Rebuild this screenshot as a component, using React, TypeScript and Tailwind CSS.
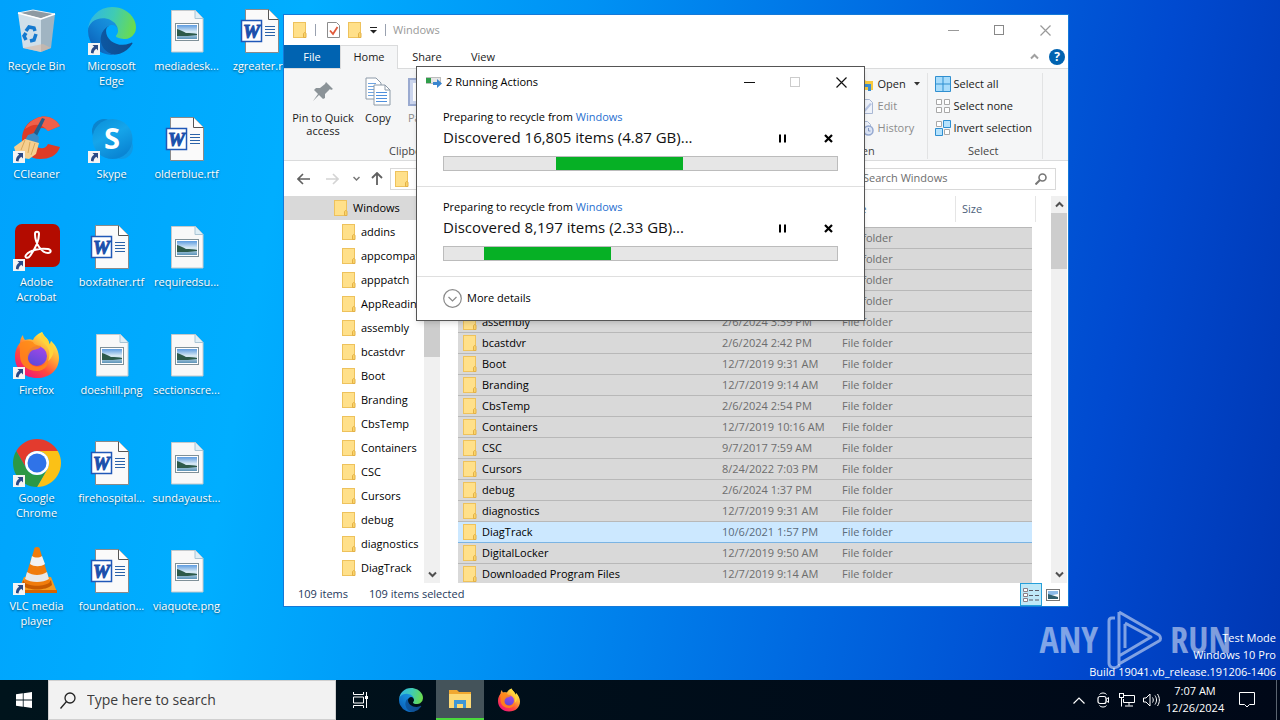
import React from "react";

interface DesktopItem {
  label: string;
  kind: string;
  shortcut?: boolean;
}

const desktopItems: DesktopItem[] = [
  { label: "Recycle Bin", kind: "bin" },
  { label: "CCleaner", kind: "ccleaner", shortcut: true },
  { label: "Adobe Acrobat", kind: "acrobat", shortcut: true },
  { label: "Firefox", kind: "firefox", shortcut: true },
  { label: "Google Chrome", kind: "chrome", shortcut: true },
  { label: "VLC media player", kind: "vlc", shortcut: true },
  { label: "Microsoft Edge", kind: "edge", shortcut: true },
  { label: "Skype", kind: "skype", shortcut: true },
  { label: "boxfather.rtf", kind: "word" },
  { label: "doeshill.png", kind: "image" },
  { label: "firehospital...", kind: "word" },
  { label: "foundation...", kind: "word" },
  { label: "mediadesk...", kind: "image" },
  { label: "olderblue.rtf", kind: "word" },
  { label: "requiredsu...", kind: "image" },
  { label: "sectionscre...", kind: "image" },
  { label: "sundayaust...", kind: "image" },
  { label: "viaquote.png", kind: "image" },
  { label: "zgreater.rtf", kind: "word" },
];

const treeItems = [
  "addins",
  "appcompat",
  "apppatch",
  "AppReadiness",
  "assembly",
  "bcastdvr",
  "Boot",
  "Branding",
  "CbsTemp",
  "Containers",
  "CSC",
  "Cursors",
  "debug",
  "diagnostics",
  "DiagTrack",
];

const files = [
  { name: "addins", date: "12/7/2019 9:14 AM" },
  { name: "appcompat", date: "2/6/2024 2:54 PM" },
  { name: "apppatch", date: "2/6/2024 3:39 PM" },
  { name: "AppReadiness", date: "2/6/2024 3:39 PM" },
  { name: "assembly", date: "2/6/2024 3:39 PM" },
  { name: "bcastdvr", date: "2/6/2024 2:42 PM" },
  { name: "Boot", date: "12/7/2019 9:31 AM" },
  { name: "Branding", date: "12/7/2019 9:14 AM" },
  { name: "CbsTemp", date: "2/6/2024 2:54 PM" },
  { name: "Containers", date: "12/7/2019 10:16 AM" },
  { name: "CSC", date: "9/7/2017 7:59 AM" },
  { name: "Cursors", date: "8/24/2022 7:03 PM" },
  { name: "debug", date: "2/6/2024 1:37 PM" },
  { name: "diagnostics", date: "12/7/2019 9:31 AM" },
  { name: "DiagTrack", date: "10/6/2021 1:57 PM" },
  { name: "DigitalLocker", date: "12/7/2019 9:50 AM" },
  { name: "Downloaded Program Files", date: "12/7/2019 9:14 AM" },
];

const jobs = [
  { id: 1, text: "Discovered 16,805 items (4.87 GB)...", start: 112 / 393 },
  { id: 2, text: "Discovered 8,197 items (2.33 GB)...", start: 40 / 393 },
];

const EdgeIcon = ({ size }: { size: number }) => (
  <svg width={size} height={size} viewBox="0 0 256 256">
    <defs>
      <linearGradient id="edgeDark" x1="0" y1="0" x2="1" y2="0">
        <stop offset="0" stopColor="#0c59a4" />
        <stop offset="1" stopColor="#114a8b" />
      </linearGradient>
      <linearGradient id="edgeBlue" x1="1" y1="0" x2="0.2" y2="1">
        <stop offset="0" stopColor="#1b9de2" />
        <stop offset="0.5" stopColor="#1383d4" />
        <stop offset="1" stopColor="#0a5cb5" />
      </linearGradient>
      <linearGradient id="edgeGreen" x1="0" y1="0.3" x2="1" y2="0.5">
        <stop offset="0" stopColor="#2fb6e6" />
        <stop offset="0.5" stopColor="#3fcbb4" />
        <stop offset="1" stopColor="#6bdc4c" />
      </linearGradient>
    </defs>
    <path fill="url(#edgeDark)" d="M231.1 190.5c-3.4 1.8-6.9 3.4-10.5 4.7a101.7 101.7 0 01-35.9 6.5c-47.3 0-88.5-32.5-88.5-74.3a31.5 31.5 0 0116.4-27.3c-42.8 1.8-53.8 46.4-53.8 72.5 0 74 68.1 81.4 82.8 81.4 7.9 0 19.8-2.3 27-4.6l1.3-.4a128.3 128.3 0 0066.6-52.8 4 4 0 00-5.4-5.7z" />
    <path fill="url(#edgeBlue)" d="M105.7 241.4a79.2 79.2 0 01-22.7-21.3 80.7 80.7 0 0129.5-120c3.2-1.5 8.5-4.1 15.6-4a32.4 32.4 0 0125.7 13 31.9 31.9 0 016.3 18.7c0-.2 24.5-79.6-80-79.6-43.9 0-80 41.7-80 78.2a130.2 130.2 0 0012.1 56 128 128 0 00156.4 67 75.5 75.5 0 01-62.8-8z" />
    <path fill="url(#edgeGreen)" d="M152.3 148.9c-.9 1-3.4 2.5-3.4 5.6 0 2.6 1.7 5.2 4.8 7.3 14.3 10 41.4 8.6 41.5 8.6a59.6 59.6 0 0030.3-8.3 61.4 61.4 0 0030.4-52.9c.3-22.4-8-37.3-11.3-43.9C223.5 23.9 177.7 0 128 0A128 128 0 000 126.2c.5-36.5 36.8-66 80-66 3.5 0 23.5.3 42 10a72.6 72.6 0 0130.9 29.3c6.1 10.6 7.2 24.1 7.2 29.5s-2.7 13.3-7.8 19.9z" />
  </svg>
);

const FirefoxIcon = ({ size }: { size: number }) => (
  <svg width={size} height={size} viewBox="0 0 48 48">
    <defs>
      <linearGradient id="ffBody" x1="0.8" y1="0.1" x2="0.2" y2="0.95">
        <stop offset="0" stopColor="#fff44f" />
        <stop offset="0.35" stopColor="#ffa436" />
        <stop offset="0.65" stopColor="#ff4a3d" />
        <stop offset="1" stopColor="#f0147a" />
      </linearGradient>
      <linearGradient id="ffGlobe" x1="0.7" y1="0" x2="0.3" y2="1">
        <stop offset="0" stopColor="#a347e8" />
        <stop offset="1" stopColor="#5a4ad8" />
      </linearGradient>
    </defs>
    <path fill="url(#ffBody)" d="M29 1c2 4 4 5 6 8 1 2 1 4 2 5 1-1 1-3 1-4 5 4 8 11 8 17 0 12-9 20-22 20S2 38 2 26c0-6 2-11 5-14 0-3 1-6 3-8 0 2 1 4 2 5 3-1 6-1 8 0 1-3 4-6 9-8z" />
    <circle cx="24" cy="25" r="10" fill="url(#ffGlobe)" />
    <path fill="#ff8a16" d="M6 13c5-4 10-4 14-2 1 3 4 3 8 4-1 3-4 3-8 4-4 2-5 6-5 9 1 6 7 9 13 7 4-1 7-4 7-9 2 7-3 14-11 14-9 0-17-6-17-15 0-5 0-9-1-12z" opacity="0.85" />
    <path fill="#ffd43a" d="M29 1c-3 5 0 9 3 12 4 4 6 10 3 17 7-5 7-14 3-20-1 2-1 3-1 4-1-2-1-4-3-6-2-2-4-4-5-7z" />
  </svg>
);

const WordFileIcon = () => (
  <svg width="48" height="48" viewBox="0 0 48 48">
    <path d="M7.500 2.500h23l10 10v33h-33z" fill="#fafafa" stroke="#8a8a8a" />
    <path d="M30.500 2.500v10h10" fill="#fff" stroke="#555" />
    <path d="M27 19.500h10M27 22.500h10M27 25.500h10M27 28.500h10" stroke="#2b62a8" />
    <rect x="3.500" y="13.500" width="20" height="21" fill="#fff" stroke="#2058b8" strokeWidth="1.500" />
    <text x="13.500" y="30.500" textAnchor="middle" fontFamily="Liberation Serif, serif" fontWeight="700" fontStyle="italic" fontSize="19" fill="#1c50ac" stroke="#1c50ac" strokeWidth="1">W</text>
  </svg>
);

const ImageFileIcon = () => (
  <svg width="48" height="48" viewBox="0 0 48 48">
    <defs>
      <linearGradient id="photoSky" x1="0" y1="0" x2="0" y2="1">
        <stop offset="0" stopColor="#5d9be0" />
        <stop offset="0.5" stopColor="#dcecf5" />
        <stop offset="1" stopColor="#5b93b8" />
      </linearGradient>
    </defs>
    <path d="M8.500 3.500h24l7.500 8v33.500h-31.500z" fill="#f8f8f8" stroke="#c4c9cc" />
    <path d="M32 3.500v8h8" fill="#dfeef6" stroke="#a9c4d4" />
    <rect x="12.500" y="16.500" width="23" height="17" fill="#fff" stroke="#7f9098" />
    <rect x="14" y="18" width="20" height="14" fill="url(#photoSky)" />
    <path d="M14 22c3 1 6 2 9 4 4 0 8 0 11 1v1c-6 1-12 1-20 1z" fill="#2d5a4a" />
  </svg>
);

const RecycleBinIcon = () => (
  <svg width="48" height="48" viewBox="0 0 48 48">
    <path d="M5 6l15-3 22 4-14 5z" fill="#8e9aa2" stroke="#e8eef2" />
    <path d="M5 6l23 6v33l-18-4z" fill="#dbe3e8" opacity="0.95" />
    <path d="M28 12l14-5-4 34-10 4z" fill="#a9b5bf" opacity="0.95" />
    <path d="M5 6l23 6 14-5" fill="none" stroke="#fff" strokeWidth="1.500" />
    <path d="M10 41l18 4 10-4-8-4z" fill="#d8b9a4" opacity="0.6" />
    <path d="M13 24l3-4 5 1 1 3M23 27l-2 6-4 1M13 33l-2-4 2-3" fill="none" stroke="#1479cf" strokeWidth="3.500" />
  </svg>
);

const CCleanerIcon = () => (
  <svg width="48" height="48" viewBox="0 0 48 48">
    <path d="M47 11C41 1 31 0 24 3 13 7 9 16 9 24c0 13 8 20 18 20 9 0 17-3 20-12l-12-3c-2 4-5 5-8 4-5-1-7-6-6-11 1-6 4-9 8-9 3 0 5 1 6 3z" fill="#de3b26" />
    <path d="M47 11C41 1 31 0 24 3c-7 3-10 7-12 11 9-6 16-6 23 2z" fill="#f0604a" />
    <path d="M29 3l3 1-9 19-4-2z" fill="#245d8c" />
    <path d="M15 20l6-2 5 4-1 6-13-3z" fill="#3c8cc8" />
    <path d="M12 24l14 4-3 11-7 5-12-2-3-10z" fill="#f5cf90" />
    <path d="M12 25l-4 10M17 27l-2 11M22 28l-4 12" stroke="#d8a85c" fill="none" />
  </svg>
);

const AcrobatIcon = () => (
  <svg width="48" height="48" viewBox="0 0 48 48">
    <rect x="2" y="1" width="45" height="43" rx="7" fill="#b30b00" />
    <path
      d="M22 11c0-3 4-3 4 0 0 7-4 15-9 22-2 3-6 2-4-1 4-5 14-7 22-6 4 1 3 4 0 4-6 0-13-9-13-19z"
      fill="none"
      stroke="#fff"
      strokeWidth="2"
    />
  </svg>
);

const SkypeIcon = () => (
  <svg width="48" height="48" viewBox="0 0 48 48">
    <defs>
      <linearGradient id="skypeFill" x1="0" y1="0" x2="0.5" y2="1">
        <stop offset="0" stopColor="#0a8fd8" />
        <stop offset="0.5" stopColor="#16a5ea" />
        <stop offset="1" stopColor="#0a86d4" />
      </linearGradient>
    </defs>
    <circle cx="16" cy="16" r="12" fill="#0b84cd" />
    <circle cx="33" cy="32" r="12" fill="#0f9ae6" />
    <circle cx="24.500" cy="24" r="20" fill="url(#skypeFill)" />
    <text x="24" y="34" textAnchor="middle" fontFamily="Open Sans, sans-serif" fontWeight="700" fontSize="29" fill="#fff">S</text>
  </svg>
);

const ChromeIcon = () => (
  <svg width="48" height="48" viewBox="0 0 48 48">
    <path d="M24 12H44.780A24 24 0 0 0 3.220 12L13.610 30A12 12 0 0 1 24 12z" fill="#e33b2e" />
    <path d="M44.780 12A24 24 0 0 1 24 48L34.390 30A12 12 0 0 0 24 12z" fill="#fbc116" />
    <path d="M3.220 12A24 24 0 0 0 24 48L34.390 30A12 12 0 0 1 13.610 30z" fill="#2b9846" />
    <circle cx="24" cy="24" r="12" fill="#fff" />
    <circle cx="24" cy="24" r="9.500" fill="#2f73e8" />
  </svg>
);

const VlcIcon = () => (
  <svg width="48" height="48" viewBox="0 0 48 48">
    <path d="M11 30h27l6 15H5z" fill="#f59a20" />
    <path d="M5 43h39v3H5z" fill="#d86400" />
    <path d="M10 33c4 6 24 6 28 0l1 5c-6 6-24 6-30 0z" fill="#c85a00" />
    <path d="M24 0c2 0 3 1 3 3l10 32c-5 5-21 5-26 0L21 3c0-2 1-3 3-3z" fill="#f07c0c" />
    <path d="M19 9c3 2 7 2 10 0l3 8c-4 3-11 3-15 0z" fill="#f2f2f2" />
    <path d="M14 25c6 4 14 4 20 0l2 7c-6 4-18 4-24 0z" fill="#e8e8e8" />
  </svg>
);

const DesktopIcon = ({ kind }: { kind: string }) => {
  switch (kind) {
    case "bin":
      return <RecycleBinIcon />;
    case "ccleaner":
      return <CCleanerIcon />;
    case "acrobat":
      return <AcrobatIcon />;
    case "firefox":
      return <FirefoxIcon size={48} />;
    case "chrome":
      return <ChromeIcon />;
    case "vlc":
      return <VlcIcon />;
    case "edge":
      return <EdgeIcon size={48} />;
    case "skype":
      return <SkypeIcon />;
    case "word":
      return <WordFileIcon />;
    default:
      return <ImageFileIcon />;
  }
};

const ShortcutArrow = () => (
  <svg className="absolute bottom-0 left-0" width="12" height="12" viewBox="0 0 12 12">
    <rect width="12" height="12" fill="#f4f4f4" />
    <path d="M4.500 2H10v5.500L8.300 5.800C6.500 7 5.800 8.200 5.500 10.500L3 10C2.800 7 4 5 6.200 3.700z" fill="#2b4a86" />
  </svg>
);

const FolderIcon = () => (
  <svg width="14" height="16" viewBox="0 0 14 16" className="shrink-0">
    <rect x="0.500" y="0.500" width="12" height="15" fill="#ffe08a" stroke="#eec25c" />
    <path d="M10.500 15.500v-4c1-1.500 2-1 2.500 0v4z" fill="#fbd568" stroke="#e3b048" />
  </svg>
);

const Chevron = ({ up, color = "#505050" }: { up?: boolean; color?: string }) => (
  <svg width="9" height="9" viewBox="0 0 9 9">
    <path d={up ? "M1 6.500l3.500-3.500L8 6.500" : "M1 2.500l3.500 3.500L8 2.500"} fill="none" stroke={color} strokeWidth="2" />
  </svg>
);

const WindowButtons = ({ color, maxColor }: { color: string; maxColor: string }) => (
  <div className="flex h-full">
    <button aria-label="Minimize" className="flex w-[46px] items-center justify-center">
      <svg width="11" height="11" viewBox="0 0 11 11">
        <path d="M0 5.500h11" stroke={color} />
      </svg>
    </button>
    <button aria-label="Maximize" className="flex w-[46px] items-center justify-center">
      <svg width="11" height="11" viewBox="0 0 11 11">
        <rect x="0.500" y="0.500" width="9" height="9" fill="none" stroke={maxColor} />
      </svg>
    </button>
    <button aria-label="Close" className="flex w-[46px] items-center justify-center">
      <svg width="11" height="11" viewBox="0 0 11 11">
        <path d="M0.500 0.500l10 10M10.500 0.500l-10 10" stroke={color} strokeWidth="1.200" />
      </svg>
    </button>
  </div>
);

const TitleBar = () => (
  <div className="flex h-[30px] items-center justify-between">
    <div className="flex items-center pl-[9px]">
      <FolderIcon />
      <span className="ml-2 h-3 w-px bg-gray-400" />
      <button aria-label="Properties" className="ml-[11px]">
        <svg width="13" height="16" viewBox="0 0 13 16">
          <path d="M0.500 0.500h9l3 3v12h-12z" fill="#fff" stroke="#8c8c8c" />
          <path d="M3 8.500l3 3.500 4.500-7" fill="none" stroke="#e0593a" strokeWidth="1.800" />
        </svg>
      </button>
      <button aria-label="New folder" className="ml-2">
        <FolderIcon />
      </button>
      <button aria-label="Customize Quick Access Toolbar" className="ml-2">
        <svg width="7" height="7" viewBox="0 0 7 7">
          <path d="M0 0.500h7" stroke="#222" />
          <path d="M0 3h7L3.500 6.500z" fill="#222" />
        </svg>
      </button>
      <span className="ml-2 h-3 w-px bg-gray-400" />
      <span className="ml-[7px] text-[#999]">Windows</span>
    </div>
    <WindowButtons color="#999" maxColor="#888" />
  </div>
);

const RibbonTabs = () => (
  <div className="flex h-6 items-stretch border-b border-[#dadbdc]">
    <button className="w-14 bg-[#0063b1] pt-px text-white">File</button>
    <button className="-mb-px w-[58px] border border-b-0 border-[#dadbdc] bg-[#f5f6f7]">Home</button>
    <button className="w-[58px] pt-px">Share</button>
    <button className="w-[54px] pt-px">View</button>
    <div className="ml-auto flex items-center gap-[10px] pr-[3px]">
      <button aria-label="Collapse ribbon">
        <Chevron up color="#a0a0a0" />
      </button>
      <button
        aria-label="Help"
        className="flex size-4 items-center justify-center rounded-full bg-[#0063b1] text-xs font-bold text-white"
      >
        ?
      </button>
    </div>
  </div>
);

const CopyIcon = () => (
  <svg width="26" height="30" viewBox="0 0 26 30">
    <path d="M1 1h10l5 5v16H1z" fill="#fff" stroke="#8c9aa8" />
    <path d="M3 6.500h8M3 9.500h11M3 12.500h11M3 15.500h11M3 18.500h11" stroke="#6ea3e0" />
    <path d="M9 8h11l5 5v15H9z" fill="#fff" stroke="#8c9aa8" />
    <path d="M20 8v5h5" fill="none" stroke="#8c9aa8" />
    <path d="M11 15.500h11M11 18.500h11M11 21.500h11M11 24.500h11" stroke="#4f90dd" />
  </svg>
);

const Ribbon = () => (
  <div className="flex h-[92px] justify-between border-b border-[#dadbdc] bg-[#f5f6f7]">
    <div className="flex flex-col justify-between pb-px">
      <div className="flex leading-[13px]">
        <button className="flex w-[78px] flex-col items-center">
          <span className="flex h-[42px] items-center justify-center pt-1">
            <svg width="22" height="22" viewBox="0 0 22 22">
              <path d="M14 1l7 7-2 1-1-1-5 5 0 4-2 1-4-4-6 6 5-7-4-4 2-2 4 0 5-4z" fill="#8b9398" />
            </svg>
          </span>
          Pin to Quick access
        </button>
        <button className="flex w-8 flex-col items-center">
          <span className="flex h-[42px] items-center justify-center pt-1">
            <CopyIcon />
          </span>
          Copy
        </button>
        <button className="flex w-14 flex-col items-center text-[#8c8c8c]">
          <span className="flex h-[42px] items-center justify-center pt-1">
            <svg width="28" height="30" viewBox="0 0 28 30">
              <rect x="1" y="2" width="22" height="26" fill="#ccd6ee" stroke="#9aaad0" strokeWidth="2" />
              <rect x="5" y="6" width="14" height="18" fill="#fff" />
            </svg>
          </span>
          Paste
        </button>
      </div>
      <div className="pl-[105px] text-[#444]">Clipboard</div>
    </div>
    <div className="flex pt-1 pb-px">
      <div className="flex w-[68px] flex-col justify-between">
        <div className="flex flex-col text-[#8c8c8c]">
          <button className="flex h-[22px] items-center gap-1 text-[#222]">
            <svg width="15" height="15" viewBox="0 0 15 15">
              <path d="M0 2h5l2 2h7v9H0z" fill="#f8c93c" />
              <path d="M3 7h9v7H9v-4H3z" fill="#3d8fd1" />
            </svg>
            Open
            <svg width="6" height="4" viewBox="0 0 6 4" className="ml-1">
              <path d="M0 0h6L3 3.500z" fill="#333" />
            </svg>
          </button>
          <button className="flex h-[22px] items-center gap-1">
            <svg width="15" height="15" viewBox="0 0 15 15">
              <path d="M2.500 0.500h8l3 3v11h-11z" fill="#eef2fa" stroke="#a9b8d4" />
              <path d="M4 12l7-8 2 1-7 8z" fill="#b7c5e4" />
            </svg>
            Edit
          </button>
          <button className="flex h-[22px] items-center gap-1">
            <svg width="15" height="15" viewBox="0 0 15 15">
              <path d="M1.500 0.500h7l3 3v10h-10z" fill="#eef2fa" stroke="#a9b8d4" />
              <circle cx="9.500" cy="9.500" r="4.500" fill="#dbe4f5" stroke="#94a8d0" strokeWidth="1.500" />
              <path d="M9.500 7v3h2" fill="none" stroke="#8298c4" />
            </svg>
            History
          </button>
        </div>
        <div className="-ml-3 text-[#444]">Open</div>
      </div>
      <div className="mr-[25px] flex flex-col justify-between border-x border-[#e2e3e4] pr-[10px] pl-[7px]">
        <div className="flex flex-col">
          <button className="flex h-[22px] items-center gap-[3px]">
            <svg width="16" height="16" viewBox="0 0 16 16">
              <path d="M0.500 0.500h15v15h-15zM8 0v16M0 8h16" fill="#a8dcfb" stroke="#2f8fd0" />
            </svg>
            Select all
          </button>
          <button className="flex h-[22px] items-center gap-[3px]">
            <svg width="16" height="16" viewBox="0 0 16 16">
              <path d="M1.500 1.500h5v5h-5zM9.500 1.500h5v5h-5zM1.500 9.500h5v5h-5zM9.500 9.500h5v5h-5z" fill="#fff" stroke="#a8a8a8" />
            </svg>
            Select none
          </button>
          <button className="flex h-[22px] items-center gap-[3px]">
            <svg width="16" height="16" viewBox="0 0 16 16">
              <path d="M1.500 1.500h5v5h-5zM9.500 9.500h5v5h-5z" fill="#fff" stroke="#a8a8a8" />
              <path d="M8.500 0.500h7v7h-7zM0.500 8.500h7v7h-7z" fill="#b5e2fd" stroke="#2f8fd0" />
            </svg>
            Invert selection
          </button>
        </div>
        <div className="text-center text-[#444]">Select</div>
      </div>
    </div>
  </div>
);

const AddressBar = () => (
  <div className="flex h-[35px] items-center pr-3">
    <div className="flex w-[106px] items-center pl-[13px]">
      <button aria-label="Back">
        <svg width="13" height="12" viewBox="0 0 13 12">
          <path d="M6 1L1 6l5 5M1 6h12" fill="none" stroke="#606060" strokeWidth="1.600" />
        </svg>
      </button>
      <button aria-label="Forward" className="ml-4">
        <svg width="13" height="12" viewBox="0 0 13 12">
          <path d="M7 1l5 5-5 5M12 6H0" fill="none" stroke="#d4d4d4" strokeWidth="1.600" />
        </svg>
      </button>
      <button aria-label="Recent locations" className="ml-[14px]">
        <svg width="7" height="6" viewBox="0 0 7 6">
          <path d="M0.500 1l3 3 3-3" fill="none" stroke="#777" strokeWidth="1.500" />
        </svg>
      </button>
      <button aria-label="Up" className="ml-[11px]">
        <svg width="12" height="13" viewBox="0 0 12 13">
          <path d="M1 6l5-5 5 5M6 1v12" fill="none" stroke="#606060" strokeWidth="1.800" />
        </svg>
      </button>
    </div>
    <div className="flex h-[22px] flex-1 items-center border border-[#d9d9d9] pl-1">
      <FolderIcon />
    </div>
    <label className="ml-3 flex h-[22px] w-[198px] items-center border border-[#d9d9d9] pr-2 pl-1">
      <input
        aria-label="Search Windows"
        placeholder="Search Windows"
        className="min-w-0 flex-1 placeholder:text-[#6d6d6d] outline-none"
      />
      <svg width="12" height="12" viewBox="0 0 12 12">
        <circle cx="7.500" cy="4.500" r="3.500" fill="none" stroke="#777" strokeWidth="1.600" />
        <path d="M5 7l-4.500 4.500" stroke="#777" strokeWidth="2" />
      </svg>
    </label>
  </div>
);

const NavPane = () => (
  <nav className="flex w-[156px] shrink-0">
    <div className="min-w-0 flex-1 overflow-hidden">
      <a href="#windows" className="flex h-6 items-center gap-[5px] bg-[#d9d9d9] pl-[50px]">
        <FolderIcon />
        Windows
      </a>
      {treeItems.map((item) => (
        <a key={item} href={`#${item}`} className="flex h-6 items-center gap-[5px] pl-[58px] whitespace-nowrap">
          <FolderIcon />
          {item}
        </a>
      ))}
    </div>
    <div className="flex w-4 shrink-0 flex-col bg-[#f0f0f0]">
      <button aria-label="Scroll up" className="flex h-[17px] items-center justify-center">
        <Chevron up />
      </button>
      <div className="flex flex-1 flex-col">
        <div className="mt-16 h-20 bg-[#cdcdcd]" />
      </div>
      <button aria-label="Scroll down" className="flex h-[17px] items-center justify-center">
        <Chevron />
      </button>
    </div>
  </nav>
);

const FileList = () => (
  <div className="flex min-w-0 flex-1 pr-px">
    <div className="min-w-0 flex-1 overflow-hidden pl-[18px]">
      <table className="w-[578px] table-fixed border-collapse text-left">
        <colgroup>
          <col className="w-[257px]" />
          <col className="w-[120px]" />
          <col className="w-[120px]" />
          <col className="w-[77px]" />
          <col className="w-1" />
        </colgroup>
        <thead className="text-[#4c607a]">
          <tr className="h-[31px] align-top leading-[26px]">
            <th className="pl-1 font-normal">Name</th>
            <th className="pl-[7px] font-normal">Date modified</th>
            <th className="pl-[7px] font-normal">Type</th>
            <th colSpan={2} className="font-normal">
              <div className="h-[26px] border-x border-[#e5e5e5] pl-[6px]">Size</div>
            </th>
          </tr>
        </thead>
        <tbody>
          {files.map((file) => {
            const focused = file.name === "DiagTrack";
            const cell = focused
              ? "border-y border-[#7bb4e3] bg-[#cce8ff] p-0 text-[#5b6b7a]"
              : "border-y border-[#b8b8b8] bg-[#d9d9d9] p-0 text-[#6d6d6d]";
            return (
              <tr key={file.name} className="h-[21px] leading-5 whitespace-nowrap">
                <td className={cell}>
                  <div className="flex items-center gap-[5px] pl-[5px] text-black">
                    <FolderIcon />
                    {file.name}
                  </div>
                </td>
                <td className={cell}>
                  <div className="pl-[7px]">{file.date}</div>
                </td>
                <td className={cell}>
                  <div className="pl-[7px]">File folder</div>
                </td>
                <td className={cell} />
              </tr>
            );
          })}
        </tbody>
      </table>
    </div>
    <div className="flex w-4 shrink-0 flex-col bg-[#f0f0f0]">
      <button aria-label="Scroll up" className="flex h-[17px] items-center justify-center">
        <Chevron up />
      </button>
      <div className="flex-1">
        <div className="h-14 bg-[#cdcdcd]" />
      </div>
      <button aria-label="Scroll down" className="flex h-[17px] items-center justify-center">
        <Chevron />
      </button>
    </div>
  </div>
);

const StatusBar = () => (
  <div className="flex h-[23px] items-center pr-2 pl-[14px] text-[#1e395b]">
    <span>109 items</span>
    <span className="ml-[21px]">109 items selected</span>
    <div className="ml-auto flex h-full items-center gap-1">
      <button aria-label="Details view" className="flex h-full w-[22px] items-center justify-center border border-[#26a0da] bg-[#bfe8f7]">
        <svg width="16" height="14" viewBox="0 0 16 14">
          <path d="M0.500 0.500h4v3h-4zM0.500 5.500h4v3h-4zM0.500 10.500h4v3h-4z" fill="#fff" stroke="#8a7f88" />
          <path d="M6 2.500h4M12 2.500h4M6 7.500h4M12 7.500h4M6 12h4M12 12h4" stroke="#5a5a66" />
        </svg>
      </button>
      <button aria-label="Large icons view" className="flex h-full items-center justify-center">
        <svg width="14" height="12" viewBox="0 0 14 12">
          <rect x="0.500" y="0.500" width="13" height="11" fill="#fff" stroke="#777" />
          <path d="M2 2h10v3L2 7z" fill="#8dbbe8" />
          <path d="M2 5l10 3v2H2z" fill="#2f5e6c" />
        </svg>
      </button>
    </div>
  </div>
);

const ExplorerWindow = () => (
  <section className="absolute top-[14px] left-[283px] flex h-[593px] w-[786px] flex-col border border-[#1579d8] bg-white text-[#1a1a1a]">
    <TitleBar />
    <RibbonTabs />
    <Ribbon />
    <AddressBar />
    <div className="flex min-h-0 flex-1 overflow-hidden text-black">
      <NavPane />
      <FileList />
    </div>
    <StatusBar />
  </section>
);

const ProgressDialog = () => (
  <section className="absolute top-[66px] left-[416px] w-[449px] border border-[#555] bg-white text-black shadow-md">
    <div className="flex h-[30px] items-center justify-between">
      <div className="flex items-center gap-1 pl-[9px]">
        <svg width="16" height="12" viewBox="0 0 16 12">
          <rect x="0.500" y="1.500" width="14" height="6" fill="#e6e6e6" stroke="#bdbdbd" />
          <rect x="0" y="2" width="5" height="5" fill="#2f9e4a" />
          <path d="M7 6h4V3l5 4.500-5 4.500V9H7z" fill="#3a86cf" />
        </svg>
        2 Running Actions
      </div>
      <WindowButtons color="#111" maxColor="#ccc" />
    </div>
    {jobs.map((job) => (
      <div key={job.id} className="border-b border-[#dfdfdf] px-[26px] pt-3 pb-[15px]">
        <p className="leading-4">
          Preparing to recycle from{" "}
          <a href="#windows" className="text-[#1f6fd0]">
            Windows
          </a>
        </p>
        <div className="flex items-center justify-between">
          <h2 className="text-[15px] leading-6 text-[#111]">{job.text}</h2>
          <div className="flex gap-[37px] pt-[2px] pr-[5px]">
            <button aria-label="Pause">
              <svg width="9" height="9" viewBox="0 0 9 9">
                <path d="M1 0.500h2v8H1zM6 0.500h2v8H6z" fill="#000" />
              </svg>
            </button>
            <button aria-label="Cancel">
              <svg width="9" height="9" viewBox="0 0 9 9">
                <path d="M1 1l7 7M8 1L1 8" stroke="#000" strokeWidth="2.200" />
              </svg>
            </button>
          </div>
        </div>
        <div
          role="progressbar"
          aria-label={job.text}
          className="mt-[7px] h-[15px] border border-[#bcbcbc] bg-[#e6e6e6]"
        >
          <div className="h-full w-[127px] bg-[#06b025]" style={{ marginLeft: `${job.start * 100}%` }} />
        </div>
      </div>
    ))}
    <button className="flex h-[43px] items-center gap-[5px] pl-[26px]">
      <svg width="19" height="19" viewBox="0 0 19 19">
        <circle cx="9.500" cy="9.500" r="8.800" fill="#fff" stroke="#8a8a8a" strokeWidth="1.200" />
        <path d="M5.500 8l4 4 4-4" fill="none" stroke="#8a8a8a" strokeWidth="1.200" />
      </svg>
      More details
    </button>
  </section>
);

const Watermark = () => (
  <div className="absolute right-[49px] bottom-[10px] flex items-center gap-2 text-[36px] leading-[60px] text-white/50 [font-family:'Open_Sans_Condensed','Roboto_Condensed','Liberation_Sans_Narrow',sans-serif]">
    <span>ANY</span>
    <svg width="56" height="60" viewBox="0 0 56 60" fill="none" stroke="#fff" strokeOpacity="0.5" strokeWidth="3">
      <path d="M13 2l40 23c2 2 2 5 0 6L13 54V2M19 14v24M13 46l32-19-26-14" strokeLinejoin="round" />
      <path d="M9 8H6c-2 0-3 1-3 3v42c0 4 4 6 8 4l3-2" strokeLinejoin="round" />
    </svg>
    <span>RUN</span>
  </div>
);

const Taskbar = () => (
  <footer className="flex h-10 items-stretch justify-between bg-linear-to-r from-[#00141c] to-[#000818] text-white">
    <div className="flex">
      <button aria-label="Start" className="flex w-12 items-center justify-center">
        <svg width="16" height="16" viewBox="0 0 16 16" fill="#fff">
          <path d="M0 2.300l6.800-1v6.300H0zM7.600 1.200L16 0v7.600H7.600zM0 8.400h6.800v6.300l-6.800-1zM7.600 8.400H16V16l-8.400-1.200z" />
        </svg>
      </button>
      <label className="flex w-72 items-center gap-[11px] border border-[#d0d0d0] bg-[#f2f2f2] pl-[11px]">
        <svg width="16" height="17" viewBox="0 0 16 17">
          <circle cx="10" cy="6" r="5" fill="none" stroke="#222" strokeWidth="1.300" />
          <path d="M6.500 9.500l-6 7" stroke="#222" strokeWidth="1.300" />
        </svg>
        <input
          aria-label="Type here to search"
          placeholder="Type here to search"
          className="min-w-0 flex-1 text-sm text-black placeholder:text-[#3c3c3c] outline-none"
        />
      </label>
      <button aria-label="Task View" className="flex w-[50px] items-center justify-center">
        <svg width="16" height="16" viewBox="0 0 16 16" fill="none" stroke="#fff">
          <path d="M0.500 0v2.500h10V0M0.500 16v-2.500h10V16M0.500 5h10v6h-10zM13.500 0v16" />
          <rect x="12" y="4" width="3" height="3" fill="#fff" stroke="none" />
        </svg>
      </button>
      <button aria-label="Microsoft Edge" className="flex w-[50px] items-center justify-center">
        <EdgeIcon size={24} />
      </button>
      <button aria-label="File Explorer" className="flex w-12 items-center justify-center border-b-2 border-[#4ad83c] bg-[#44535a]">
        <svg width="22" height="20" viewBox="0 0 22 20">
          <path d="M0 1h8l2 2h12v16H0z" fill="#f0a830" />
          <path d="M0 5h22v14H0z" fill="#fcd975" />
          <path d="M5 11h12v8h-3v-4H8v4H5z" fill="#3f97d6" />
        </svg>
      </button>
      <button aria-label="Firefox" className="flex w-[50px] items-center justify-center">
        <FirefoxIcon size={24} />
      </button>
    </div>
    <div className="flex items-center">
      <button aria-label="Show hidden icons" className="flex w-6 justify-center">
        <svg width="12" height="7" viewBox="0 0 12 7">
          <path d="M0.500 6.500L6 1l5.500 5.500" fill="none" stroke="#fff" strokeWidth="1.200" />
        </svg>
      </button>
      <button aria-label="Meet Now" className="flex w-6 justify-center">
        <svg width="13" height="16" viewBox="0 0 13 16" fill="none" stroke="#fff">
          <path d="M2.500 2.500C4 0.500 8 0.500 9.500 2.500M2.500 13.500c1.500 2 5.500 2 7 0" />
          <rect x="1" y="4.500" width="8" height="7" rx="2" strokeWidth="1.200" />
          <path d="M9 7.500l2.500-2v5L9 8.500" />
        </svg>
      </button>
      <button aria-label="Network" className="flex w-6 justify-center">
        <svg width="16" height="14" viewBox="0 0 16 14" fill="none" stroke="#fff">
          <path d="M5 2.500h10.500v7H4.500V6M10 9.500v3M6 13h8" />
          <rect x="0.500" y="0.500" width="4" height="4" />
          <path d="M2.500 5v8.500" />
        </svg>
      </button>
      <button aria-label="Volume" className="flex w-6 justify-center">
        <svg width="17" height="14" viewBox="0 0 17 14" fill="none" stroke="#fff">
          <path d="M0.500 5h2.500l4-4v12l-4-4H0.500z" />
          <path d="M9.500 4.500c1 1.500 1 3.500 0 5M12 2.500c2 3 2 6 0 9M14.500 1c2.500 4 2.500 8 0 12" />
        </svg>
      </button>
      <time className="w-16 pb-[2px] text-center leading-[17px]">
        7:07 AM
        <br />
        12/26/2024
      </time>
      <button aria-label="Notifications" className="flex w-10 justify-center">
        <svg width="16" height="16" viewBox="0 0 16 16" fill="none" stroke="#fff">
          <path d="M0.500 0.500h15v12h-5l-2.500 2.500-2.500-2.500h-5z" />
        </svg>
      </button>
      <button aria-label="Show desktop" className="ml-[9px] h-full w-1 border-l border-[#5a6470]" />
    </div>
  </footer>
);

const App: React.FC = () => {
  return (
    <div className="flex h-screen flex-col overflow-hidden text-[11px] [font-family:'Open_Sans','Noto_Sans',sans-serif]">
      <main className="relative flex-1 overflow-hidden bg-[linear-gradient(100deg,#00a2fc_0%,#00aeff_22%,#0092f4_42%,#0068e0_66%,#004ad0_84%,#0036b2_100%)]">
        <div className="-ml-px grid w-max auto-cols-[75px] grid-flow-col grid-rows-[repeat(6,108px)] pt-[7px]">
          {desktopItems.map((item) => (
            <button key={item.label} className="flex flex-col items-center">
              <span className="relative">
                <DesktopIcon kind={item.kind} />
                {item.shortcut && <ShortcutArrow />}
              </span>
              <span className="mt-[3px] px-1 leading-[15px] text-white [text-shadow:0_1px_2px_rgba(0,0,0,0.5)]">
                {item.label}
              </span>
            </button>
          ))}
        </div>
        <Watermark />
        <p className="absolute right-1 bottom-0 text-right leading-[17px] text-white">
          Test Mode
          <br />
          Windows 10 Pro
          <br />
          Build 19041.vb_release.191206-1406
        </p>
        <ExplorerWindow />
        <ProgressDialog />
      </main>
      <Taskbar />
    </div>
  );
};

export default App;
